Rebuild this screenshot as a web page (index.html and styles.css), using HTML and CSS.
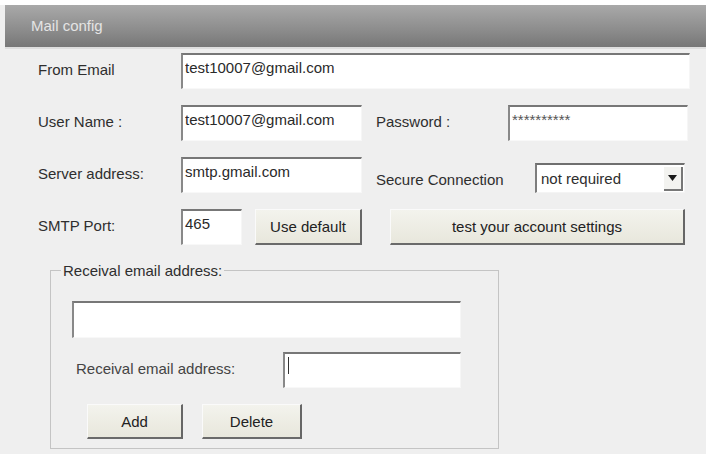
FILE: index.html
```html
<!DOCTYPE html>
<html lang="en">
  <head>
    <meta charset="UTF-8" />
    <meta name="viewport" content="width=device-width, initial-scale=1.0" />
    <title>Mail config</title>

    <link rel="stylesheet" href="styles.css">
  </head>
  <body>
    <div class="strip"></div>
    <div class="panel">
      <div class="panel_title">Mail config</div>

      <div class="form">
        <div class="row">
          <label class="label">From Email</label>
          <input class="field w_full" type="text" value="test10007@gmail.com" />
        </div>

        <div class="row">
          <label class="label">User Name :</label>
          <input class="field w_half" type="text" value="test10007@gmail.com" />
          <label class="label label_right w_pass">Password :</label>
          <input class="field w_pass_field pass" type="text" value="**********" />
        </div>

        <div class="row">
          <label class="label">Server address:</label>
          <input class="field w_half" type="text" value="smtp.gmail.com" />
          <div class="secure">
            <label class="label label_right w_secure">Secure Connection</label>
            <div class="select">
              <span>not required</span>
              <span class="select_arrow">
                <svg width="9" height="6" viewBox="0 0 9 6"><path d="M0 0h9L4.5 6z" fill="#1a1a1a"/></svg>
              </span>
            </div>
          </div>
        </div>

        <div class="row">
          <label class="label">SMTP Port:</label>
          <input class="field w_port" type="text" value="465" />
          <button class="btn btn_default">Use default</button>
          <button class="btn btn_test">test your account settings</button>
        </div>

        <fieldset class="group">
          <legend>Receival email address:</legend>
          <div class="group_body">
            <input class="field w_list" type="text" value="" />
            <div class="row row_add">
              <label class="label w_add_label">Receival email address:</label>
              <input class="field w_add caret" type="text" value="" />
            </div>
            <div class="buttons">
              <button class="btn btn_add">Add</button>
              <button class="btn btn_delete">Delete</button>
            </div>
          </div>
        </fieldset>
      </div>
    </div>
  </body>
</html>
```

FILE: styles.css
```css
*,
*::before,
*::after {
  box-sizing: border-box;
}
html {
  font-family: "Liberation Sans", Arial, sans-serif;
  font-size: 15px;
  margin: 0;
  padding: 0;
}
body {
  margin: 0;
  min-height: 100vh;
  background: #efefef;
  color: #2e2e2e;
}

.strip {
  height: 5px;
  background: #fff;
}

.panel {
  margin-left: 5px;
}

.panel_title {
  height: 44px;
  line-height: 42px;
  padding-left: 26px;
  color: #e4e4e4;
  background: linear-gradient(#a9a9a9, #8c8c8c 60%, #777);
  border-bottom: 2px solid #dedede;
}

.form {
  padding: 4px 0 0 33px;
}

.row {
  display: flex;
  align-items: center;
  margin-bottom: 16px;
}

.label {
  width: 143px;
  flex: none;
  margin-top: -3px;
}
.label_right {
  margin-left: 14px;
}
.w_pass {
  width: 132px;
}
.w_secure {
  width: 159px;
  margin-top: 3px;
}

/* sunken text boxes */
.field {
  flex: none;
  height: 36px;
  margin: 0;
  padding: 4px 2px 13px;
  font: inherit;
  line-height: 17px;
  color: #2a2a2a;
  background: #fff;
  border-style: solid;
  border-width: 2px 1px 1px 2px;
  border-color: #777 #f6f6f6 #f8f8f8 #888;
  border-radius: 0;
  outline: none;
}
.w_full {
  width: 509px;
}
.w_half {
  width: 181px;
}
.w_pass_field {
  width: 180px;
}
.w_port {
  width: 61px;
}
.pass {
  color: #555;
}

.secure {
  display: flex;
  align-items: center;
  align-self: flex-start;
  margin-top: 6px;
}

.select {
  display: flex;
  align-items: center;
  justify-content: space-between;
  width: 150px;
  height: 30px;
  padding: 0 1px 0 4px;
  background: #fff;
  border-style: solid;
  border-width: 2px 1px 1px 2px;
  border-color: #6f6f6f #f4f4f4 #f4f4f4 #7d7d7d;
}
.select_arrow {
  display: flex;
  align-items: center;
  justify-content: center;
  width: 19px;
  height: 24px;
  background: #f3f3f0;
  border-right: 2px solid #777;
  border-bottom: 2px solid #777;
}

/* raised buttons */
.btn {
  flex: none;
  height: 36px;
  margin: 0;
  padding: 0;
  font: inherit;
  color: #222;
  background: linear-gradient(#f3f3ed, #e8e7dc);
  border-style: solid;
  border-width: 1px 2px 2px 1px;
  border-color: #fafafa #666 #6a6a6a #fafafa;
  border-radius: 0;
}
.btn_default {
  width: 107px;
  margin-left: 13px;
}
.btn_test {
  width: 295px;
  margin-left: 28px;
}

.group {
  width: 449px;
  margin: 17px 0 0 12px;
  padding: 0;
  border: 1px solid #c4c4c4;
}
.group legend {
  margin-left: 10px;
  padding: 0 2px;
  line-height: 17px;
}

.group_body {
  padding: 22px 0 9px 21px;
}
.w_list {
  width: 389px;
  height: 37px;
}

.row_add {
  margin: 14px 0 16px;
}
.w_add_label {
  width: 207px;
  margin-left: 4px;
  color: #444;
}
.w_add {
  width: 178px;
}
.caret {
  background: linear-gradient(#333, #333) no-repeat 3px 3px / 1px 17px, #fff;
}

.buttons {
  display: flex;
  gap: 19px;
  padding-left: 15px;
}
.btn_add {
  width: 96px;
  height: 35px;
}
.btn_delete {
  width: 100px;
  height: 35px;
}
```
